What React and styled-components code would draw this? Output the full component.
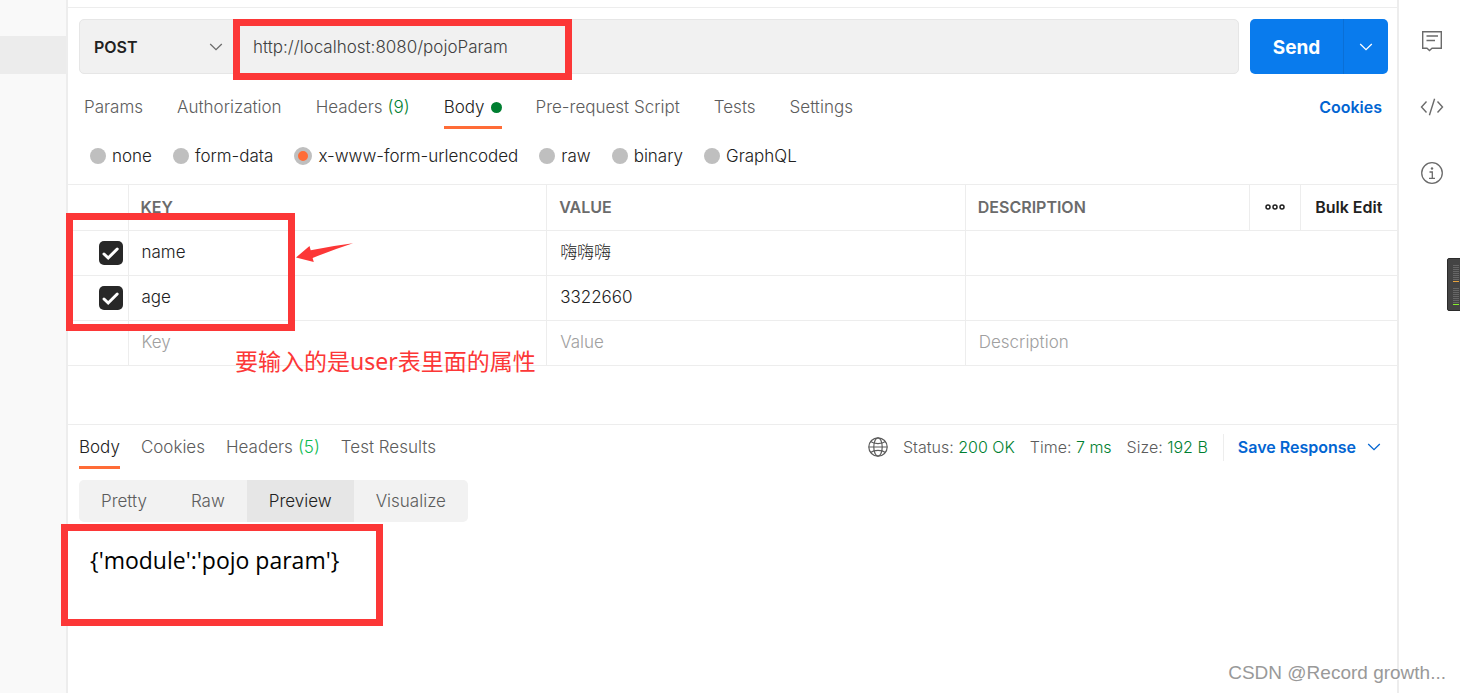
import React from "react";
import styled, { createGlobalStyle } from "styled-components";

const RED = "#fc3737";
const LINE = "#ededed";

const GlobalStyle = createGlobalStyle`
  * { box-sizing: border-box; }
  body {
    margin: 0;
    background: #fff;
    color: #212121;
    font: 300 17px/24px Inter, "Noto Sans CJK SC", sans-serif;
  }
  button, input, select { font: inherit; color: inherit; }
  button { border: 0; padding: 0; background: none; cursor: pointer; }
  a { text-decoration: none; }
`;

const Page = styled.div`
  position: relative;
  display: flex;
  min-height: 100vh;
  overflow: hidden;
`;

const Sidebar = styled.aside`
  flex: 0 0 68px;
  padding-top: 36px;
  background: #f9f9f9;
  border-right: 2px solid ${LINE};
`;

const SidebarItem = styled.div`
  height: 38px;
  background: #ececec;
`;

const Main = styled.main`
  flex: 1;
  min-width: 0;
`;

const TopEdge = styled.div`
  height: 8px;
  border-bottom: 1px solid ${LINE};
`;

const RequestBar = styled.form`
  display: flex;
  gap: 11px;
  height: 66px;
  padding: 11px 9px 0 11px;
`;

const UrlGroup = styled.div`
  flex: 1;
  display: flex;
  border: 1px solid #e6e6e6;
  border-radius: 5px;
  background: #f1f1f1;
`;

const MethodWrap = styled.div`
  display: flex;
  align-items: center;
  width: 160px;
  padding-right: 17px;
  color: #6b6b6b;
`;

const MethodSelect = styled.select`
  flex: 1;
  height: 100%;
  padding: 0 14px;
  border: 0;
  background: transparent;
  appearance: none;
  color: #212121;
  font-size: 16px;
  font-weight: 600;
`;

const UrlInput = styled.input`
  flex: 1;
  min-width: 0;
  padding: 0 13px;
  border: 0;
  background: transparent;
  color: #404040;
`;

const SendGroup = styled.div`
  display: flex;
  border-radius: 5px;
  overflow: hidden;
  background: #097bed;
  color: #fff;
`;

const SendButton = styled.button`
  width: 94px;
  padding-top: 2px;
  border-right: 1px solid #0a6fd6;
  font-size: 19px;
  font-weight: 700;
`;

const SendMenu = styled.button`
  width: 44px;
  display: grid;
  place-items: center;
`;

const TabRow = styled.div`
  display: flex;
  align-items: flex-start;
  gap: ${(p) => p.$gap}px;
  height: ${(p) => p.$height}px;
  padding: ${(p) => p.$pad};
`;

const Tab = styled.button`
  display: flex;
  align-items: center;
  gap: 5px;
  height: 34px;
  padding-bottom: 7px;
  border-bottom: 3px solid ${(p) => (p.$active ? "#ff6c37" : "transparent")};
  color: ${(p) => (p.$active ? "#212121" : "#5c5c5c")};
  white-space: nowrap;
`;

const Count = styled.span`
  color: ${(p) => p.$color};
`;

const Dot = styled.span`
  width: 11px;
  height: 11px;
  margin-left: 1px;
  border-radius: 50%;
  background: #007f31;
`;

const BlueLink = styled.a`
  margin-left: auto;
  color: #0265d2;
  font-size: 16px;
  font-weight: 600;
`;

const ModeRow = styled.div`
  display: flex;
  align-items: flex-start;
  gap: 21px;
  height: 40px;
  padding-left: 22px;
`;

const Mode = styled.label`
  display: flex;
  align-items: center;
  gap: 6px;
  white-space: nowrap;
`;

const Radio = styled.input`
  appearance: none;
  width: 16px;
  height: 16px;
  margin: 0;
  border-radius: 50%;
  background: #bfbfbf;
  &:checked {
    width: 18px;
    height: 18px;
    border: 4px solid #bfbfbf;
    background: #ff6c37;
  }
`;

const ParamTable = styled.table`
  width: 100%;
  border-collapse: collapse;
  table-layout: fixed;
  border-top: 1px solid ${LINE};
  border-bottom: 1px solid ${LINE};
`;

const NarrowCol = styled.col`
  width: ${(p) => p.$width}px;
`;

const FieldCol = styled.col`
  width: 31.5%;
`;

const HeadCell = styled.th`
  height: 46px;
  padding: 0 12px 2px;
  border-left: ${(p) => (p.$first ? 0 : 1)}px solid ${LINE};
  color: #6b6b6b;
  font-size: 16px;
  font-weight: 600;
  text-align: left;
  white-space: nowrap;
`;

const HeadAction = styled(HeadCell)`
  padding: 0 0 2px;
`;

const HeadButton = styled.button`
  display: flex;
  justify-content: center;
  align-items: center;
  width: 100%;
  height: 24px;
  color: #212121;
  white-space: nowrap;
`;

const Cell = styled.td`
  height: 45px;
  padding: 0 0 2px 13px;
  border-top: 1px solid ${LINE};
  border-left: ${(p) => (p.$first ? 0 : 1)}px solid ${LINE};
  vertical-align: middle;
`;

const CheckCell = styled(Cell)`
  padding: 0 5px 0 0;
`;

const CellInput = styled.input`
  display: block;
  width: 100%;
  height: 24px;
  padding: 0;
  border: 0;
  background: transparent;
  &::placeholder { color: #a0a0a0; opacity: 1; }
`;

const CheckBox = styled.label`
  position: relative;
  display: block;
  width: 24px;
  height: 24px;
  margin-left: auto;
  svg { position: absolute; inset: 0; }
`;

const CheckInput = styled.input`
  appearance: none;
  display: block;
  width: 24px;
  height: 24px;
  margin: 0;
  border-radius: 5px;
  background: #282828;
`;

const Response = styled.section`
  margin-top: 58px;
  border-top: 1px solid ${LINE};
`;

const Meta = styled.div`
  display: flex;
  align-items: center;
  gap: 15px;
  margin-left: auto;
  height: 24px;
  color: #5c5c5c;
  font-size: 16px;
  white-space: nowrap;
`;

const Good = styled.span`
  color: #007f31;
`;

const SaveButton = styled.button`
  display: flex;
  align-items: center;
  gap: 11px;
  height: 27px;
  padding-left: 14px;
  border-left: 1px solid ${LINE};
  color: #0265d2;
  font-size: 16px;
  font-weight: 600;
`;

const Segments = styled.div`
  display: inline-flex;
  margin-left: 11px;
  border-radius: 5px;
  overflow: hidden;
  background: #f2f2f2;
`;

const Segment = styled.button`
  height: 42px;
  padding: 0 22px;
  background: ${(p) => (p.$active ? "#e6e6e6" : "transparent")};
  color: ${(p) => (p.$active ? "#212121" : "#5c5c5c")};
`;

const Preview = styled.div`
  padding: 22px;
  color: #000;
  font: 400 23px/32px "Open Sans", "Noto Sans", sans-serif;
`;

const Rail = styled.nav`
  flex: 0 0 63px;
  display: flex;
  flex-direction: column;
  align-items: center;
  gap: 42px;
  padding: 29px 0 0 5px;
  border-left: 2px solid ${LINE};
  color: #6b6b6b;
`;

const RailButton = styled.button`
  width: 24px;
  height: 24px;
`;

const Frame = styled.div`
  position: absolute;
  left: ${(p) => p.$x}px;
  top: ${(p) => p.$y}px;
  width: ${(p) => p.$w}px;
  height: ${(p) => p.$h}px;
  border: 7px solid ${RED};
  pointer-events: none;
`;

const Arrow = styled.svg`
  position: absolute;
  left: 296px;
  top: 242px;
`;

const Note = styled.p`
  position: absolute;
  left: 235px;
  top: 344px;
  margin: 0;
  color: ${RED};
  font: 400 23px/34px "Noto Sans", "Noto Sans CJK SC", sans-serif;
  white-space: nowrap;
`;

const Watermark = styled.p`
  position: absolute;
  right: 14px;
  bottom: 7px;
  margin: 0;
  color: #999;
  font: 400 19px/26px "Liberation Sans", sans-serif;
  text-shadow: 1px 1px 0 #fff;
`;

const Meter = styled.svg`
  position: absolute;
  right: 0;
  top: 258px;
`;

const Chevron = () => (
  <svg width="14" height="8" viewBox="0 0 14 8" fill="none" stroke="currentColor" strokeWidth="1.3">
    <path d="M1.2 1l5.8 5.6L12.8 1" />
  </svg>
);

const Globe = () => (
  <svg width="20" height="20" viewBox="0 0 20 20" fill="none" stroke="currentColor" strokeWidth="1.2">
    <circle cx="10" cy="10" r="9.2" />
    <ellipse cx="10" cy="10" rx="4.2" ry="9.2" />
    <path d="M.8 10h18.4M2.6 4.6c2 1.5 4.5 2 7.4 2s5.4-.5 7.4-2M2.6 15.4c2-1.5 4.5-2 7.4-2s5.4.5 7.4 2" />
  </svg>
);

const modes = ["none", "form-data", "x-www-form-urlencoded", "raw", "binary", "GraphQL"];
const rows = [
  { key: "name", value: "嗨嗨嗨" },
  { key: "age", value: "3322660" },
];
const ticks = [0, 1, 2, 3, 4, 5, 6, 7];

export default function App() {
  return (
    <Page>
      <GlobalStyle />
      <Sidebar>
        <SidebarItem />
      </Sidebar>
      <Main>
        <TopEdge />
        <RequestBar onSubmit={(e) => e.preventDefault()}>
          <UrlGroup>
            <MethodWrap>
              <MethodSelect aria-label="Method" defaultValue="POST">
                <option>POST</option>
              </MethodSelect>
              <Chevron />
            </MethodWrap>
            <UrlInput aria-label="Request URL" defaultValue="http://localhost:8080/pojoParam" />
          </UrlGroup>
          <SendGroup>
            <SendButton type="submit">Send</SendButton>
            <SendMenu type="button" aria-label="Send options">
              <Chevron />
            </SendMenu>
          </SendGroup>
        </RequestBar>

        <TabRow $gap={34} $height={70} $pad="21px 15px 0 16px">
          <Tab>Params</Tab>
          <Tab>Authorization</Tab>
          <Tab>Headers <Count $color="#007f31">(9)</Count></Tab>
          <Tab $active>Body <Dot /></Tab>
          <Tab>Pre-request Script</Tab>
          <Tab>Tests</Tab>
          <Tab>Settings</Tab>
          <BlueLink href="#cookies">Cookies</BlueLink>
        </TabRow>

        <ModeRow>
          {modes.map((m) => (
            <Mode key={m}>
              <Radio type="radio" name="mode" defaultChecked={m === "x-www-form-urlencoded"} />
              {m}
            </Mode>
          ))}
        </ModeRow>

        <ParamTable>
          <colgroup>
            <NarrowCol $width={60} />
            <FieldCol />
            <FieldCol />
            <col />
            <NarrowCol $width={51} />
            <NarrowCol $width={97} />
          </colgroup>
          <thead>
            <tr>
              <HeadCell $first />
              <HeadCell>KEY</HeadCell>
              <HeadCell>VALUE</HeadCell>
              <HeadCell>DESCRIPTION</HeadCell>
              <HeadAction>
                <HeadButton aria-label="Columns">
                  <svg width="20" height="6" viewBox="0 0 20 6" fill="none" stroke="currentColor" strokeWidth="1.5">
                    <circle cx="3" cy="3" r="2" />
                    <circle cx="10" cy="3" r="2" />
                    <circle cx="17" cy="3" r="2" />
                  </svg>
                </HeadButton>
              </HeadAction>
              <HeadAction>
                <HeadButton>Bulk Edit</HeadButton>
              </HeadAction>
            </tr>
          </thead>
          <tbody>
            {rows.map((r) => (
              <tr key={r.key}>
                <CheckCell $first>
                  <CheckBox>
                    <CheckInput type="checkbox" defaultChecked aria-label={r.key} />
                    <svg width="24" height="24" viewBox="0 0 24 24" fill="none" stroke="#fff" strokeWidth="3">
                      <path d="M5 13l4.2 4L18.2 8" strokeLinecap="round" />
                    </svg>
                  </CheckBox>
                </CheckCell>
                <Cell><CellInput aria-label="Key" defaultValue={r.key} /></Cell>
                <Cell><CellInput aria-label="Value" defaultValue={r.value} /></Cell>
                <Cell colSpan={3}><CellInput aria-label="Description" /></Cell>
              </tr>
            ))}
            <tr>
              <Cell $first />
              <Cell><CellInput aria-label="Key" placeholder="Key" /></Cell>
              <Cell><CellInput aria-label="Value" placeholder="Value" /></Cell>
              <Cell colSpan={3}><CellInput aria-label="Description" placeholder="Description" /></Cell>
            </tr>
          </tbody>
        </ParamTable>

        <Response>
          <TabRow $gap={21} $height={55} $pad="10px 16px 0 11px">
            <Tab $active>Body</Tab>
            <Tab>Cookies</Tab>
            <Tab>Headers <Count $color="#0cbb52">(5)</Count></Tab>
            <Tab>Test Results</Tab>
            <Meta>
              <Globe />
              <span>Status: <Good>200 OK</Good></span>
              <span>Time: <Good>7 ms</Good></span>
              <span>Size: <Good>192 B</Good></span>
              <SaveButton>Save Response <Chevron /></SaveButton>
            </Meta>
          </TabRow>
          <Segments>
            <Segment>Pretty</Segment>
            <Segment>Raw</Segment>
            <Segment $active>Preview</Segment>
            <Segment>Visualize</Segment>
          </Segments>
          <Preview>{"{'module':'pojo param'}"}</Preview>
        </Response>
      </Main>

      <Rail>
        <RailButton aria-label="Comments">
          <svg width="24" height="24" viewBox="0 0 24 24" fill="none" stroke="currentColor" strokeWidth="1.4">
            <path d="M2.7 2.7h18.6v16.6H12l-2.5 2.2L7 19.3H2.7zM6.5 7h11.5M6.5 11.5h8.5" />
          </svg>
        </RailButton>
        <RailButton aria-label="Code">
          <svg width="24" height="24" viewBox="0 0 24 24" fill="none" stroke="currentColor" strokeWidth="1.4">
            <path d="M6.5 6.5L1.5 12l5 5.5M17.5 6.5l5 5.5-5 5.5M14.6 3.8L9.4 20.2" />
          </svg>
        </RailButton>
        <RailButton aria-label="Info">
          <svg width="24" height="24" viewBox="0 0 24 24" fill="none" stroke="currentColor" strokeWidth="1.3">
            <circle cx="12" cy="12" r="10.3" />
            <path d="M9.5 11h2.8v6M9 17.3h6" />
            <circle cx="12" cy="7.5" r="1.2" fill="currentColor" stroke="none" />
          </svg>
        </RailButton>
      </Rail>

      <Frame $x={233} $y={19} $w={339} $h={61} />
      <Frame $x={66} $y={213} $w={229} $h={118} />
      <Frame $x={61} $y={524} $w={322} $h={102} />
      <Arrow width="58" height="22" viewBox="0 0 58 22" fill={RED}>
        <path d="M0 15.5L13.5 4l1.2 4.2Q35 4 57 1.2Q36 8 16.6 16l1.2 4z" />
      </Arrow>
      <Note>要输入的是user表里面的属性</Note>
      <Meter width="13" height="53" viewBox="0 0 13 53">
        <rect x=".5" y=".5" width="15" height="52" rx="1.5" fill="#444" stroke="#2b2b2b" />
        {ticks.map((t) => (
          <React.Fragment key={t}>
            <rect x="6" y={7 + t * 2} width="6" height="1" fill="#666" />
            <rect x="6" y={30 + t * 2} width="6" height="1" fill="#666" />
          </React.Fragment>
        ))}
        <rect x="6" y="23" width="6" height="1" fill="#e8a33d" />
        <rect x="6" y="46" width="6" height="1" fill="#85f02c" />
      </Meter>
      <Watermark>CSDN @Record growth...</Watermark>
    </Page>
  );
}
